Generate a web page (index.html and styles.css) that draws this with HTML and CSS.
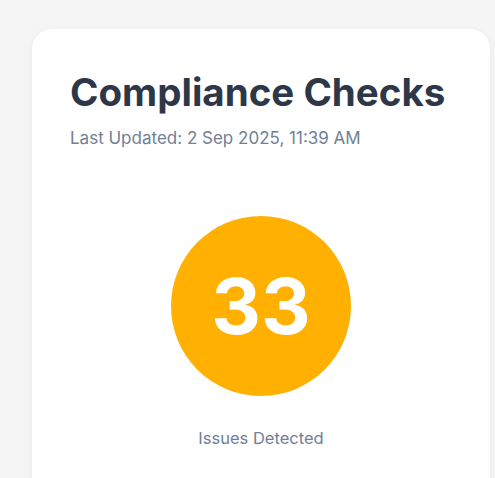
FILE: index.html
```html
<!DOCTYPE html>
<html>
<head>
<meta charset="utf-8">
<link rel="stylesheet" href="styles.css">
</head>
<body>
<div class="card">
  <h1 class="title">Compliance Checks</h1>
  <p class="updated">Last Updated: 2 Sep 2025, 11:39 AM</p>
  <div class="stat">
    <div class="circle"><span class="count">33</span></div>
    <div class="label">Issues Detected</div>
  </div>
</div>
</body>
</html>
```

FILE: styles.css
```css
html, body {
  margin: 0;
  padding: 0;
}
body {
  background: #f5f5f5;
  font-family: Inter, "Noto Sans", sans-serif;
  padding: 29px 5px 0 32px;
  height: 478px;
  box-sizing: border-box;
  overflow: hidden;
}
.card {
  background: #ffffff;
  border-radius: 20px;
  box-shadow: 0 2px 8px rgba(0,0,0,0.05);
  padding: 40px 38px 40px 38px;
  height: 600px;
  box-sizing: border-box;
}
.title {
  margin: 0;
  font-size: 38.5px;
  line-height: 46px;
  font-weight: 700;
  color: #2d3748;
}
.updated {
  margin: 12px 0 0 0;
  font-size: 17px;
  line-height: 22px;
  color: #718096;
}
.stat {
  display: flex;
  flex-direction: column;
  align-items: center;
  margin-top: 67px;
}
.circle {
  width: 180px;
  height: 180px;
  border-radius: 50%;
  background: #ffb000;
  display: flex;
  align-items: center;
  justify-content: center;
}
.count {
  color: #ffffff;
  font-size: 77px;
  font-weight: 700;
  line-height: 1;
}
.label {
  margin-top: 32px;
  font-size: 16.5px;
  color: #718096;
}
```
